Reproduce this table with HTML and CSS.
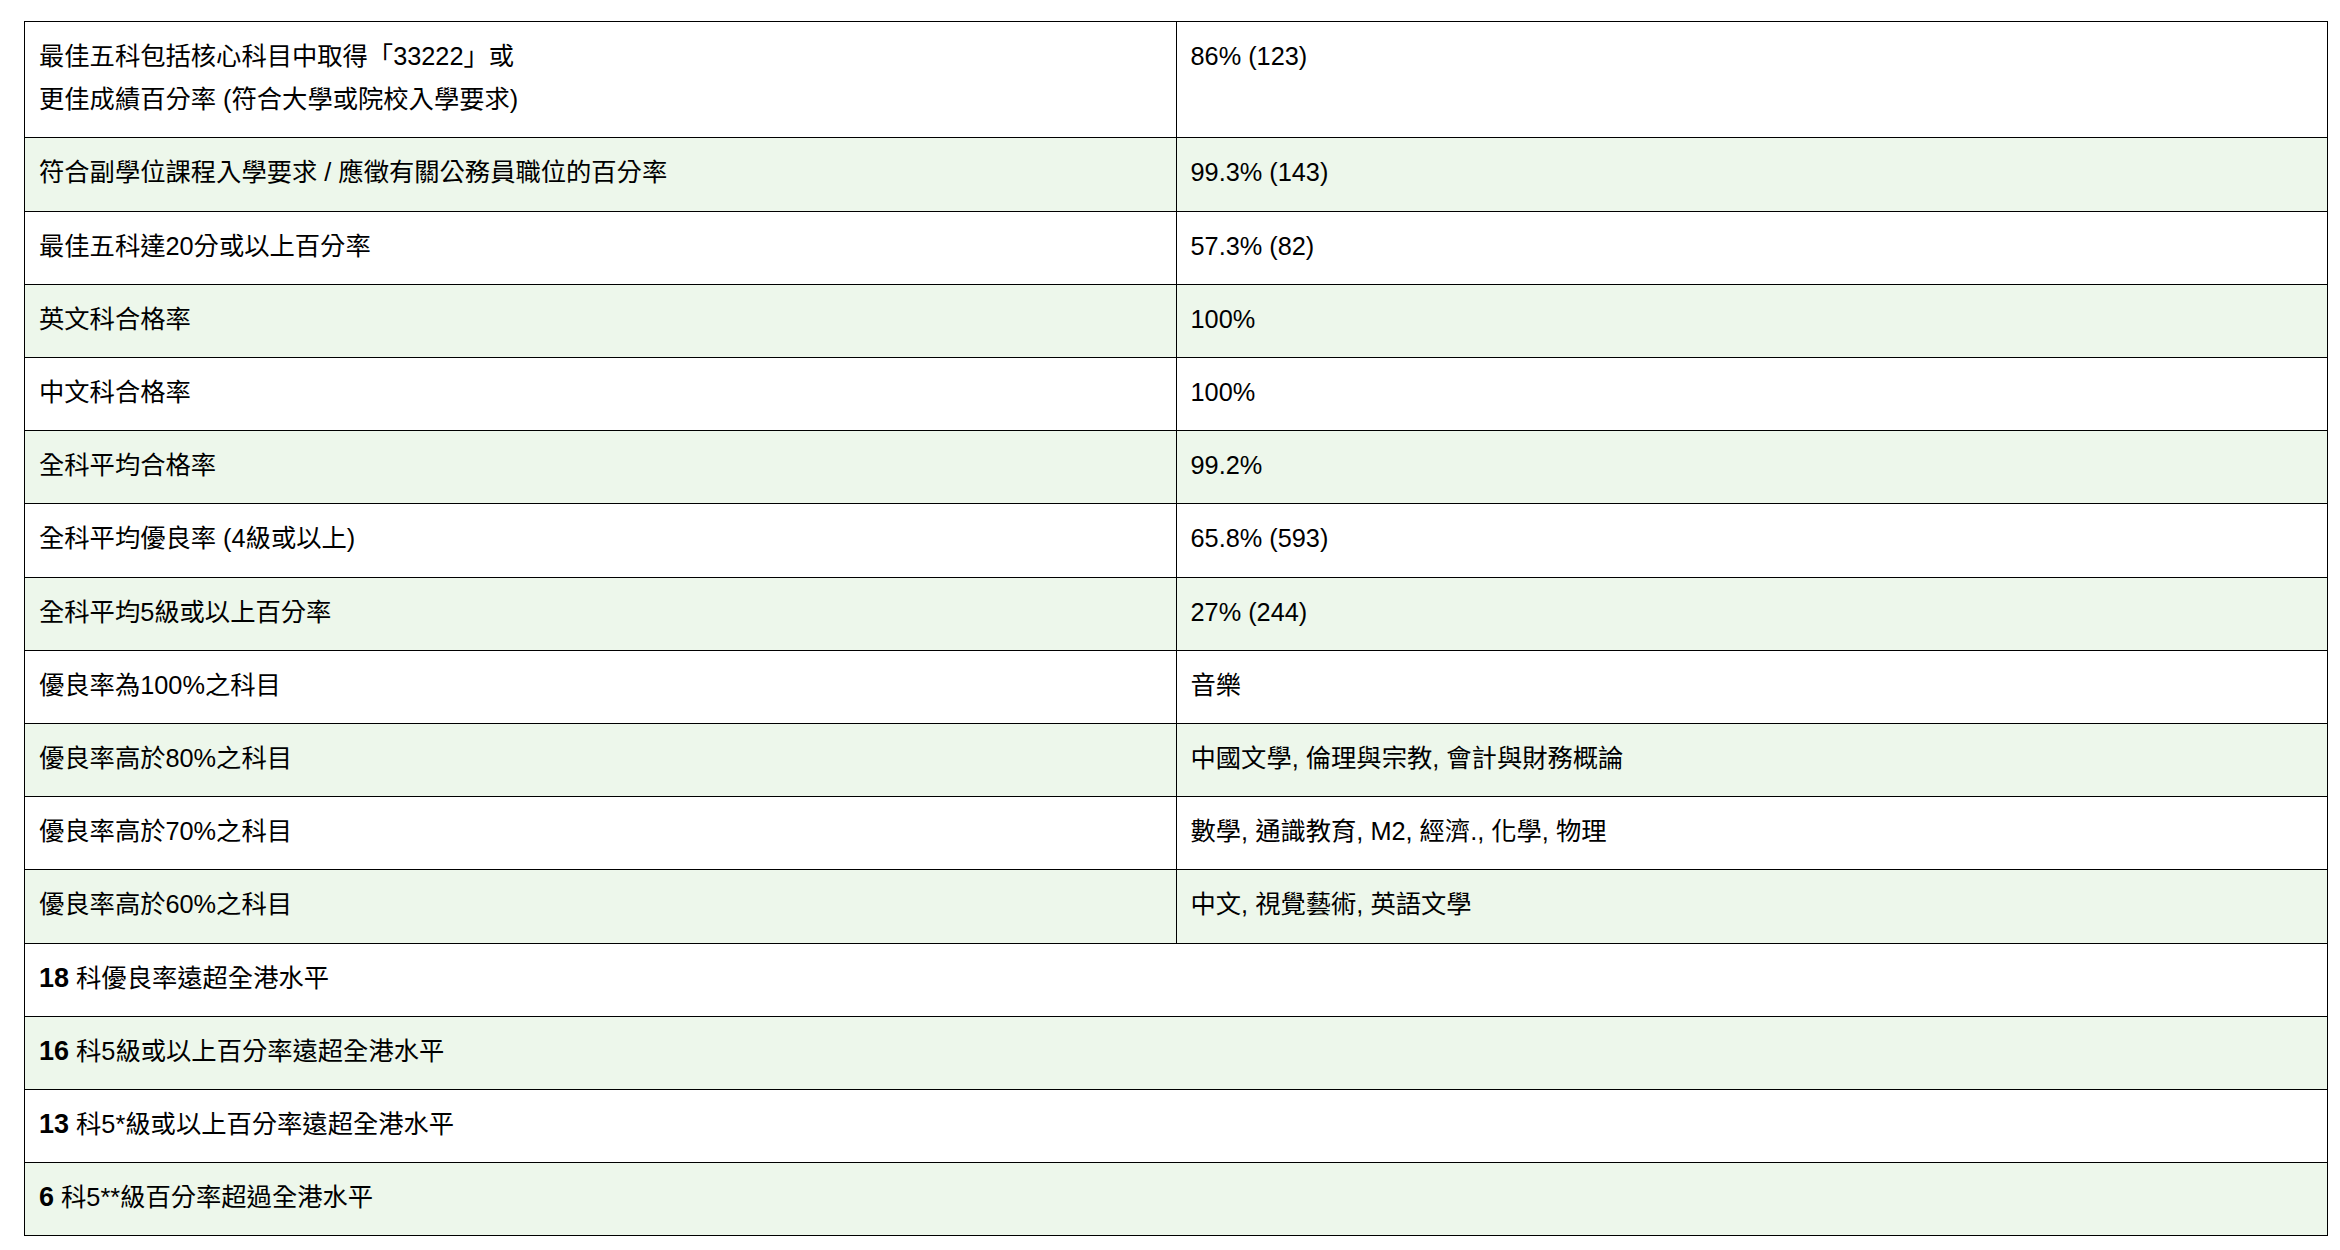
FILE: index.html
```html
<!DOCTYPE html>
<html lang="zh-Hant">
<head>
<meta charset="utf-8">
<title>成績</title>
<link rel="stylesheet" href="styles.css">
</head>
<body>
<table class="results">
  <tbody>
    <tr class="row"><td class="cell">最佳五科包括核心科目中取得「33222」或<br>更佳成績百分率 (符合大學或院校入學要求)</td><td class="cell">86% (123)</td></tr>
    <tr class="row alt"><td class="cell">符合副學位課程入學要求 / 應徵有關公務員職位的百分率</td><td class="cell">99.3% (143)</td></tr>
    <tr class="row"><td class="cell">最佳五科達20分或以上百分率</td><td class="cell">57.3% (82)</td></tr>
    <tr class="row alt"><td class="cell">英文科合格率</td><td class="cell">100%</td></tr>
    <tr class="row"><td class="cell">中文科合格率</td><td class="cell">100%</td></tr>
    <tr class="row alt"><td class="cell">全科平均合格率</td><td class="cell">99.2%</td></tr>
    <tr class="row"><td class="cell">全科平均優良率 (4級或以上)</td><td class="cell">65.8% (593)</td></tr>
    <tr class="row alt"><td class="cell">全科平均5級或以上百分率</td><td class="cell">27% (244)</td></tr>
    <tr class="row"><td class="cell">優良率為100%之科目</td><td class="cell">音樂</td></tr>
    <tr class="row alt"><td class="cell">優良率高於80%之科目</td><td class="cell">中國文學, 倫理與宗教, 會計與財務概論</td></tr>
    <tr class="row"><td class="cell">優良率高於70%之科目</td><td class="cell">數學, 通識教育, M2, 經濟., 化學, 物理</td></tr>
    <tr class="row alt"><td class="cell">優良率高於60%之科目</td><td class="cell">中文, 視覺藝術, 英語文學</td></tr>
    <tr class="row"><td class="cell" colspan="2"><strong class="num">18</strong> 科優良率遠超全港水平</td></tr>
    <tr class="row alt"><td class="cell" colspan="2"><strong class="num">16</strong> 科5級或以上百分率遠超全港水平</td></tr>
    <tr class="row"><td class="cell" colspan="2"><strong class="num">13</strong> 科5*級或以上百分率遠超全港水平</td></tr>
    <tr class="row alt"><td class="cell" colspan="2"><strong class="num">6</strong> 科5**級百分率超過全港水平</td></tr>
  </tbody>
</table>
</body>
</html>
```

FILE: styles.css
```css
html, body {
  margin: 0;
  background: #ffffff;
}

body {
  padding: 21px 0 0 24px;
  font-family: "Liberation Sans", "Noto Sans CJK TC", sans-serif;
  font-size: 25.3px;
  color: #000000;
}

.results {
  width: 2304px;
  border-collapse: collapse;
  table-layout: fixed;
  border: 1px solid #000000;
}

.cell {
  width: 50%;
  border: 1px solid #000000;
  padding: 13px 16px 16px 14px;
  line-height: 43.2px;
  vertical-align: top;
  text-align: left;
}

.row {
  background: #ffffff;
}

.row.alt {
  background: #edf7eb;
}

.num {
  font-weight: bold;
  font-size: 27px;
}
```
